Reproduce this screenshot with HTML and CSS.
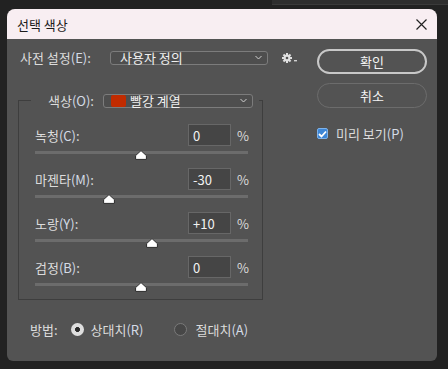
FILE: index.html
```html
<!DOCTYPE html>
<html>
<head>
	<title>선택 색상</title>
	<meta charset="utf-8">
	<link rel="stylesheet" href="styles.css">
</head>
<body>
<div class="backdrop"></div>
<div class="dialog">
	<div class="titlebar">
		<span class="title">선택 색상</span>
		<svg class="close" width="11" height="11" viewBox="0 0 11 11"><path d="M0.5 0.5L10.5 10.5M10.5 0.5L0.5 10.5" stroke="#222" stroke-width="1.2"/></svg>
	</div>
	<div class="content">
		<div class="left">
			<div class="preset-row">
				<span class="lbl preset-lbl">사전 설정<span class="key">(E)</span>:</span>
				<div class="select preset-select">
					<span>사용자 정의</span>
					<svg class="chev" width="7" height="5" viewBox="0 0 7 5"><path d="M0.5 1L3.5 4L6.5 1" stroke="#cfcfcf" fill="none"/></svg>
				</div>
				<svg class="gear" width="16" height="12" viewBox="0 0 16 12">
					<g fill="#e0e0e0">
						<circle cx="5" cy="6" r="3.4"/>
						<rect x="4" y="1" width="2" height="10"/>
						<rect x="0" y="5" width="10" height="2"/>
						<rect x="4" y="1" width="2" height="10" transform="rotate(45 5 6)"/>
						<rect x="4" y="1" width="2" height="10" transform="rotate(-45 5 6)"/>
					</g>
					<circle cx="5" cy="6" r="1.3" fill="#535353"/>
					<rect x="12" y="8" width="3" height="1.4" fill="#d0d0d0"/>
				</svg>
			</div>

			<fieldset class="group">
				<legend>
					<span class="lbl">색상<span class="key">(O)</span>:</span>
					<div class="select color-select">
						<span class="swatch"></span>
						<span>빨강 계열</span>
						<svg class="chev" width="7" height="5" viewBox="0 0 7 5"><path d="M0.5 1L3.5 4L6.5 1" stroke="#cfcfcf" fill="none"/></svg>
					</div>
				</legend>

				<div class="row">
					<span class="lbl">녹청<span class="key">(C)</span>:</span>
					<div class="num">0</div>
					<span class="pct">%</span>
				</div>
				<div class="track"><svg class="thumb" style="left:100px" width="12" height="10" viewBox="0 0 12 10"><path d="M6 0.6L11.4 5.6V9.4H0.6V5.6Z" fill="#fff" stroke="#2a2a2a" stroke-linejoin="round"/></svg></div>

				<div class="row">
					<span class="lbl">마젠타<span class="key">(M)</span>:</span>
					<div class="num">-30</div>
					<span class="pct">%</span>
				</div>
				<div class="track"><svg class="thumb" style="left:68px" width="12" height="10" viewBox="0 0 12 10"><path d="M6 0.6L11.4 5.6V9.4H0.6V5.6Z" fill="#fff" stroke="#2a2a2a" stroke-linejoin="round"/></svg></div>

				<div class="row">
					<span class="lbl">노랑<span class="key">(Y)</span>:</span>
					<div class="num">+10</div>
					<span class="pct">%</span>
				</div>
				<div class="track"><svg class="thumb" style="left:111px" width="12" height="10" viewBox="0 0 12 10"><path d="M6 0.6L11.4 5.6V9.4H0.6V5.6Z" fill="#fff" stroke="#2a2a2a" stroke-linejoin="round"/></svg></div>

				<div class="row">
					<span class="lbl">검정<span class="key">(B)</span>:</span>
					<div class="num">0</div>
					<span class="pct">%</span>
				</div>
				<div class="track last"><svg class="thumb" style="left:100px" width="12" height="10" viewBox="0 0 12 10"><path d="M6 0.6L11.4 5.6V9.4H0.6V5.6Z" fill="#fff" stroke="#2a2a2a" stroke-linejoin="round"/></svg></div>
			</fieldset>

			<div class="method">
				<span class="lbl">방법:</span>
				<span class="radio on"></span>
				<span class="lbl">상대치<span class="key">(R)</span></span>
				<span class="radio off"></span>
				<span class="lbl">절대치<span class="key">(A)</span></span>
			</div>
		</div>

		<div class="right">
			<div class="btn ok">확인</div>
			<div class="btn cancel">취소</div>
			<label class="preview">
				<span class="check"><svg width="9" height="8" viewBox="0 0 9 8"><path d="M1 4L3.5 6.5L8 1.5" stroke="#fff" stroke-width="1.8" fill="none"/></svg></span>
				<span class="lbl">미리 보기<span class="key">(P)</span></span>
			</label>
		</div>
	</div>
</div>
</body>
</html>
```

FILE: styles.css
```css
html,body{margin:0;padding:0;}
body{
	background:#222;
	font:13px/15px "Noto Sans CJK KR","Noto Sans",sans-serif;
	color:#dcdcdc;
	height:369px;
	overflow:hidden;
}

.backdrop{
	height:4px;
	margin-left:272px;
	background:#2e2e2e;
	border-bottom:1px solid #3a3a3a;
}

.dialog{
	width:430px;
	height:352px;
	margin:4px 0 0 7px;
	background:#535353;
	border-radius:8px 8px 6px 6px;
	overflow:hidden;
}
.titlebar{
	height:30px;
	background:#f8eef2;
	display:flex;
	align-items:center;
	justify-content:space-between;
	padding:0 10px 0 10px;
}
.title{
	color:#1c1c1c;
	font-size:13px;
}

.content{
	display:flex;
	padding:10px 10px 0 11px;
}
.left{width:282px;}
.right{
	width:110px;
	margin-left:17px;
	display:flex;
	flex-direction:column;
}

.lbl{white-space:nowrap;}
.key{color:#d4dbe6;}

.preset-row{
	display:flex;
	align-items:center;
	height:15px;
	margin-top:1px;
}
.preset-lbl{
	width:90px;
	margin-left:2px;
}

.select{
	display:flex;
	align-items:center;
	height:14px;
	box-sizing:border-box;
	border:1px solid #7c7c7c;
	border-radius:3px;
	background:#4e4e4e;
	color:#f0f0f0;
}
.select .chev{
	margin-left:auto;
	margin-right:5px;
}
.preset-select{
	width:158px;
	padding-left:9px;
}
.gear{margin-left:14px;margin-top:1px;}

.group{
	width:245px;
	box-sizing:border-box;
	margin:28px 0 0 0;
	padding:16px 14px 0 16px;
	border:1px solid #3e3e3e;
	min-inline-size:0;
}
.group legend{
	display:flex;
	align-items:center;
	padding:0 6px 0 17px;
	margin-left:-4px;
}
.color-select{
	width:150px;
	margin-left:9px;
	height:14px;
	padding-left:7px;
}
.swatch{
	width:15px;
	height:12px;
	background:#c12b00;
	border-radius:2px;
	margin-right:4px;
}

.row{
	display:flex;
	align-items:center;
	height:22px;
}
.row .lbl{flex:1;}
.num{
	width:43px;
	height:22px;
	box-sizing:border-box;
	border:1px solid #676767;
	background:#454545;
	color:#f2f2f2;
	padding:3px 0 0 4px;
}
.pct{
	width:11px;
	margin-left:6px;
}
.track{
	position:relative;
	height:3px;
	margin:5px 0 14px;
	background:#6c6c6c;
}
.track.last{margin-bottom:13px;}
.thumb{
	position:absolute;
	top:-1px;
}

.method{
	display:flex;
	align-items:center;
	height:14px;
	margin:22px 0 0 12px;
}
.radio{
	width:13px;
	height:13px;
	box-sizing:border-box;
	border-radius:50%;
	margin:0 7px 0 13px;
}
.radio.on{
	background:radial-gradient(circle,#2b2b2b 0 2.2px,#dedede 2.6px);
}
.radio.off{
	border:1px solid #7a7a7a;
	background:#474747;
	margin:0 8px 0 31px;
}

.btn{
	height:25px;
	box-sizing:border-box;
	border-radius:13px;
	display:flex;
	align-items:center;
	justify-content:center;
	color:#f4f4f4;
}
.btn.ok{border:2px solid #c8c8c8;}
.btn.cancel{
	border:1.5px solid #6c6c6c;
	margin-top:9px;
}
.preview{
	display:flex;
	align-items:center;
	margin-top:18px;
}
.check{
	width:11px;
	height:11px;
	box-sizing:border-box;
	background:#3d86d6;
	border:1px solid #7db2ea;
	border-radius:2px;
	display:flex;
	align-items:center;
	justify-content:center;
	margin-right:8px;
}
```
